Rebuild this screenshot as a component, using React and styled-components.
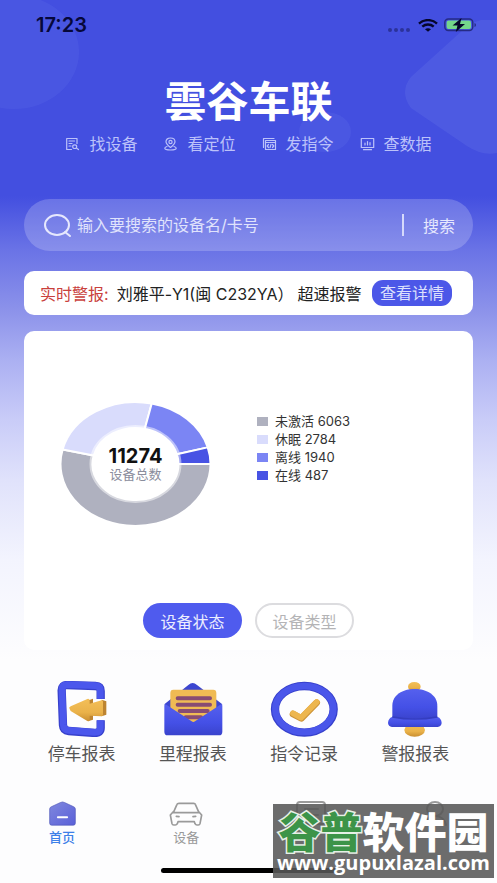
import React, { useState } from 'react';
import styled, { createGlobalStyle, css } from 'styled-components';

const GlobalStyle = createGlobalStyle`
  * {
    box-sizing: border-box;
  }

  body {
    margin: 0;
    background: #fdfdfe;
    font-family: Inter, 'Noto Sans CJK SC', sans-serif;
  }

  button,
  input {
    font: inherit;
    border: 0;
    padding: 0;
    background: none;
  }

  ul {
    list-style: none;
    margin: 0;
    padding: 0;
  }
`;

const Page = styled.div`
  position: relative;
  display: flex;
  flex-direction: column;
  min-height: 100vh;
  background: linear-gradient(
    #434fe0 0,
    #434fe0 196px,
    #6a73e6 250px,
    #8c92ea 310px,
    #abb0f2 360px,
    #c9ccf8 420px,
    #e0e2fb 480px,
    #f3f4fe 560px,
    #fdfdfe 660px
  );
  overflow: hidden;
`;

const Backdrop = styled.svg`
  position: absolute;
  top: 0;
  ${(p) => (p.$side === 'left' ? 'left: 0;' : 'right: 0;')}
`;

const StatusBar = styled.div`
  position: relative;
  display: flex;
  justify-content: space-between;
  align-items: center;
  height: 50px;
  padding: 0 20px 0 36px;
  color: #06083a;
  font-size: 20px;
  font-weight: 600;
`;

const StatusIcons = styled.div`
  display: flex;
  align-items: center;
  gap: 6px;
`;

const Hero = styled.header`
  position: relative;
  display: flex;
  flex-direction: column;
  align-items: center;
  gap: 4px;
  padding-top: 26px;
`;

const Brand = styled.h1`
  margin: 0;
  color: #fff;
  font-size: 42px;
  line-height: 52px;
  font-weight: 700;
`;

const Features = styled.ul`
  display: flex;
  gap: 26px;
`;

const Feature = styled.li`
  display: flex;
  align-items: center;
  gap: 9px;
  color: #bcc2fa;
  font-size: 16px;
  line-height: 24px;
`;

const Content = styled.main`
  position: relative;
  display: flex;
  flex-direction: column;
  padding: 43px 24px 0;
`;

const SearchBar = styled.form`
  display: flex;
  align-items: center;
  height: 52px;
  padding: 0 18px 0 20px;
  border-radius: 26px;
  background: rgba(255, 255, 255, 0.2);
  color: #e6e8fd;
  font-size: 16px;
`;

const SearchInput = styled.input`
  flex: 1;
  min-width: 0;
  margin-left: 6px;
  color: #fff;
  outline: none;

  &::placeholder {
    color: #e0e3fc;
    opacity: 1;
  }
`;

const SearchButton = styled.button`
  display: flex;
  align-items: center;
  gap: 19px;
  color: #e6e8fd;
  cursor: pointer;

  &::before {
    content: '';
    width: 2px;
    height: 22px;
    background: #d5d9fb;
  }
`;

const AlertBar = styled.section`
  display: flex;
  align-items: center;
  gap: 8px;
  height: 44px;
  margin-top: 20px;
  padding: 0 21px 0 16px;
  border-radius: 10px;
  background: #fff;
  color: #222;
  font-size: 16px;
  white-space: nowrap;
`;

const AlertLabel = styled.span`
  color: #c9403c;
`;

const AlertText = styled.span`
  display: flex;
  gap: 4px;
`;

const DetailButton = styled.button`
  width: 80px;
  height: 26px;
  margin-left: auto;
  border-radius: 11px;
  background: #4c57e8;
  color: #dde0fd;
  line-height: 26px;
  cursor: pointer;
`;

const Card = styled.section`
  display: flex;
  flex-direction: column;
  margin-top: 16px;
  padding: 71px 36px 12px;
  border-radius: 10px;
  background: #fff;
`;

const ChartRow = styled.div`
  display: flex;
  align-items: flex-start;
  gap: 46px;
`;

const Donut = styled.div`
  display: grid;
  place-items: center;

  > * {
    grid-area: 1 / 1;
  }
`;

const Total = styled.div`
  display: flex;
  flex-direction: column;
  align-items: center;
  color: #8a8d9c;
  font-size: 13px;
  line-height: 16px;

  strong {
    color: #111;
    font-size: 20px;
    line-height: 20px;
    font-weight: 700;
  }
`;

const Legend = styled.ul`
  padding-top: 10px;
  color: #333;
  font-size: 13px;
  line-height: 18px;
`;

const LegendItem = styled.li`
  display: flex;
  align-items: center;
  gap: 7px;

  &::before {
    content: '';
    width: 11px;
    height: 9px;
    background: ${(p) => p.$color};
  }
`;

const Switcher = styled.div`
  display: flex;
  justify-content: center;
  gap: 13px;
  margin-top: 77px;
`;

const Pill = styled.button`
  width: 99px;
  height: 35px;
  border-radius: 18px;
  font-size: 16px;
  cursor: pointer;
  ${(p) =>
    p.$active
      ? css`
          background: #4f5bee;
          color: #eceefe;
        `
      : css`
          border: 2px solid #dcdcdf;
          color: #b4b4b6;
        `}
`;

const Shortcuts = styled.nav`
  display: grid;
  grid-template-columns: repeat(4, 1fr);
  margin: 31px 2px 0;
`;

const Shortcut = styled.a`
  display: flex;
  flex-direction: column;
  align-items: center;
  gap: 4px;
  color: #555;
  font-size: 17px;
  line-height: 26px;
  text-decoration: none;
`;

const TabBar = styled.nav`
  display: grid;
  grid-template-columns: repeat(4, 1fr);
  margin-top: 34px;
`;

const Tab = styled.a`
  display: flex;
  flex-direction: column;
  align-items: center;
  gap: 2px;
  color: ${(p) => (p.$active ? '#3d80e8' : '#999')};
  font-size: 13px;
  line-height: 18px;
  font-weight: ${(p) => (p.$active ? 500 : 400)};
  text-decoration: none;
`;

const HomeIndicator = styled.div`
  width: 176px;
  height: 5px;
  margin: 22px auto 10px;
  border-radius: 3px;
  background: #000;
`;

const Watermark = styled.div`
  position: absolute;
  right: 3px;
  bottom: 5px;
  width: 221px;
  height: 74px;
  padding-top: 3px;
  background: rgba(88, 88, 88, 0.88);
  color: #fff;
  text-align: center;
  white-space: nowrap;
`;

const WatermarkName = styled.div`
  font: 900 42px/46px 'Noto Sans CJK SC', sans-serif;

  span {
    color: #3c9448;
    -webkit-text-stroke: 3px #e6f0e6;
    paint-order: stroke fill;
  }
`;

const WatermarkUrl = styled.div`
  font: 700 20px/20px 'Open Sans', sans-serif;
`;

const stats = [
  { name: '未激活', value: 6063, color: '#afb1bf' },
  { name: '休眠', value: 2784, color: '#d9dcfc' },
  { name: '离线', value: 1940, color: '#7b85f4' },
  { name: '在线', value: 487, color: '#4853e4' },
];

const total = stats.reduce((sum, s) => sum + s.value, 0);

const point = (angle, rx, ry) => `${75 + rx * Math.cos(angle)} ${62 + ry * Math.sin(angle)}`;

const DonutChart = () => {
  let start = 0;
  return (
    <svg width="151" height="124" viewBox="0 0 150 124" aria-hidden="true">
      {stats.map((s) => {
        const end = start + (s.value / total) * Math.PI * 2;
        const large = end - start > Math.PI ? 1 : 0;
        const d = `M${point(start, 75, 62)} A75 62 0 ${large} 1 ${point(end, 75, 62)} L${point(end, 43, 36)} A43 36 0 ${large} 0 ${point(start, 43, 36)}Z`;
        start = end;
        return <path key={s.name} d={d} fill={s.color} stroke="#fff" strokeWidth="2" />;
      })}
      <ellipse cx="75" cy="62" rx="44" ry="37" fill="none" stroke="#fff" strokeOpacity=".5" strokeWidth="4" />
    </svg>
  );
};

const LineIcon = ({ children }) => (
  <svg width="15" height="14" viewBox="0 0 14 14" fill="none" stroke="currentColor" strokeWidth="1.2" strokeLinecap="round" strokeLinejoin="round" aria-hidden="true">
    {children}
  </svg>
);

const features = [
  {
    label: '找设备',
    icon: <path d="M6 12.5H1.2V1.5h10.3v5M3.5 4h5.5M3.5 6.5h3M3.5 9h2M11.2 9.7a2 1.8 0 1 1-4 0 2 1.8 0 0 1 4 0M10.8 11l2.2 1.6" />,
  },
  {
    label: '看定位',
    icon: (
      <>
        <path d="M7 10.5C3.8 8 2.5 6.5 2.5 4.8 2.5 2.5 4.5 1 7 1s4.5 1.5 4.5 3.8C11.5 6.5 10.2 8 7 10.5z" />
        <circle cx="7" cy="5" r="1.6" />
        <path d="M3.5 9.5C2 10 1.3 10.7 1.3 11.3c0 1 2.5 1.7 5.7 1.7s5.7-.7 5.7-1.7c0-.6-.7-1.3-2.2-1.8" />
      </>
    ),
  },
  {
    label: '发指令',
    icon: (
      <>
        <path d="M1 10.5V1.5h10.5" />
        <path d="M3 3.5h10v9H3zM3 5.5h10M6 7.5 4.7 9 6 10.5M10 7.5 11.3 9 10 10.5M8.5 7.3l-1 3.4" />
      </>
    ),
  },
  {
    label: '查数据',
    icon: <path d="M.8 1.5h12.4v9H.8zM3 12.7h8M4.5 6v2M7 4.5V8M9.5 5.5V8" />,
  },
];

const WifiIcon = () => (
  <svg width="20" height="13" viewBox="0 0 20 13" fill="none" stroke="#05062a" strokeWidth="2.4" aria-hidden="true">
    <path d="M1 4.7C6-.1 14-.1 19 4.7M4.3 7.7c3.3-2.9 8.1-2.9 11.4 0" />
    <path d="M7 10.3c1.7-1.5 4.3-1.5 6 0l-3 2.4z" fill="#05062a" stroke="none" />
  </svg>
);

const BatteryIcon = () => (
  <svg width="33" height="14" viewBox="0 0 33 14" aria-hidden="true">
    <rect x=".8" y="1" width="28" height="11.5" rx="3.5" fill="none" stroke="#252b84" strokeWidth="1.4" />
    <rect x="2.6" y="2.6" width="24.4" height="8.3" rx="2" fill="#74d68b" />
    <path d="M30.5 5v4c2-.8 2-3.2 0-4z" fill="#252b84" />
    <path d="M17.5 0 8.5 7.5h5L11.8 14 21 6h-5z" fill="#05062a" />
  </svg>
);

const HiddenSvg = styled.svg`
  position: absolute;
`;

const Gradients = () => (
  <HiddenSvg width="0" height="0" aria-hidden="true">
    <defs>
      <linearGradient id="blue" x1="0" y1="0" x2="0" y2="1">
        <stop offset="0" stopColor="#5560ee" />
        <stop offset=".6" stopColor="#4450e6" />
        <stop offset="1" stopColor="#3a43cc" />
      </linearGradient>
      <linearGradient id="gold" x1="0" y1="0" x2="0" y2="1">
        <stop offset="0" stopColor="#f3bf58" />
        <stop offset=".6" stopColor="#eab24a" />
        <stop offset="1" stopColor="#ca8f32" />
      </linearGradient>
      <linearGradient id="home" x1="0" y1="0" x2="1" y2="1">
        <stop offset="0" stopColor="#8088de" />
        <stop offset="1" stopColor="#5a60d8" />
      </linearGradient>
    </defs>
  </HiddenSvg>
);

const ParkingIcon = () => (
  <svg width="51" height="56" viewBox="80 34 153 168" aria-hidden="true">
    <path d="M214 88V64q0-14-16-15l-84-3q-17 0-17 16l4 105q1 16 17 17l78 6q18 0 18-15v-23" fill="none" stroke="#3740cc" strokeWidth="25" />
    <path d="M213 87V62q0-13-15-14l-84-3q-16 0-16 15l4 106q1 15 16 16l78 6q17 0 17-14v-22" fill="none" stroke="#4b57ec" strokeWidth="20" />
    <path d="M178 92l13-5v63l-13 4zM217 90l14 5v40l-14 5z" fill="#bd8430" />
    <path d="M121 118q-4-4 3-8l50-22q7-2 7 6v8l36-10q4 0 4 4v40q0 4-5 4l-35-2v13q0 6-7 3l-50-30z" fill="url(#gold)" />
  </svg>
);

const MileageIcon = () => (
  <svg width="60" height="56" viewBox="398 34 180 168" aria-hidden="true">
    <path d="M402 104l72-58q13-12 26 0l76 58-87 70z" fill="#3c46d0" />
    <path d="M420 70q0-10 9-10h120q9 0 9 10v95H420z" fill="#f0bb54" />
    <path d="M442 86h97M442 105h97M448 124h84M466 143h46" stroke="#884c73" strokeWidth="12" strokeLinecap="round" />
    <path d="M402 108q0-6 6-3l76 50q5 4 10 0l76-50q6-3 6 3v78q0 11-10 11H412q-10 0-10-11z" fill="url(#blue)" />
  </svg>
);

const CommandIcon = () => (
  <svg width="68" height="56" viewBox="58 34 204 168" aria-hidden="true">
    <ellipse cx="161" cy="119" rx="88" ry="70" fill="none" stroke="#3740cc" strokeWidth="25" />
    <ellipse cx="161" cy="118" rx="87" ry="69" fill="none" stroke="#4a56ea" strokeWidth="20" />
    <path d="M127 133l25 13 46-47" fill="none" stroke="#cc9338" strokeWidth="20" strokeLinecap="round" strokeLinejoin="round" />
    <path d="M127 131l24 13 47-47" fill="none" stroke="#edb64e" strokeWidth="17" strokeLinecap="round" strokeLinejoin="round" />
  </svg>
);

const BellIcon = () => (
  <svg width="56" height="56" viewBox="412 34 168 168" aria-hidden="true">
    <ellipse cx="494" cy="51" rx="19" ry="14" fill="url(#gold)" />
    <ellipse cx="495" cy="181" rx="31" ry="20" fill="url(#gold)" />
    <path d="M428 150V108c0-32 31-50 67-50s68 18 68 50v42z" fill="url(#blue)" />
    <path d="M427 142q68 12 137 0 11 4 12 18-1 10-12 12H427q-11-2-12-12 1-14 12-18z" fill="url(#blue)" />
    <path d="M428 142q67 13 135 0" fill="none" stroke="#343dc0" strokeWidth="4" />
  </svg>
);

const shortcuts = [
  { label: '停车报表', icon: <ParkingIcon /> },
  { label: '里程报表', icon: <MileageIcon /> },
  { label: '指令记录', icon: <CommandIcon /> },
  { label: '警报报表', icon: <BellIcon /> },
];

const tabs = [
  {
    id: 'home',
    label: '首页',
    icon: (
      <svg width="27" height="25" viewBox="147 61 82 75" aria-hidden="true">
        <path d="M149 85q0-5 5-7l28-13q6-3 12 0l28 13q5 2 5 7v43q0 6-6 6h-66q-6 0-6-6z" fill="url(#home)" stroke="#5057b8" strokeWidth="2" />
        <path d="M174 110h28" stroke="#fff" strokeWidth="6" strokeLinecap="round" />
      </svg>
    ),
  },
  {
    id: 'devices',
    label: '设备',
    icon: (
      <svg width="34" height="25" viewBox="510 61 102 75" fill="none" stroke="#9a9a9a" strokeWidth="5" strokeLinejoin="round" strokeLinecap="round" aria-hidden="true">
        <path d="M523 96l11-25q1-3 6-3h44q4 0 5 3l11 25M523 96h77M522 94l-8 9 5 26q1 4 5 4h5q4 0 6-4l2-6h49l2 6q2 4 6 4h4q4 0 5-4l5-26-8-9M532 107l8 1M582 108l8-1" />
      </svg>
    ),
  },
  {
    id: 'list',
    icon: (
      <svg width="32" height="25" viewBox="0 0 32 25" fill="none" stroke="#9a9a9a" strokeWidth="2" strokeLinecap="round" aria-hidden="true">
        <path d="M2 20V4q0-3 3-3h22q3 0 3 3v16q0 3-3 3H5q-3 0-3-3M10 8h13M10 14h13" />
      </svg>
    ),
  },
  {
    id: 'profile',
    icon: (
      <svg width="32" height="25" viewBox="0 0 32 25" fill="none" stroke="#9a9a9a" strokeWidth="2" strokeLinecap="round" aria-hidden="true">
        <ellipse cx="16" cy="8" rx="8" ry="7" />
        <path d="M5 24c1-5 5-9 11-9s10 4 11 9" />
      </svg>
    ),
  },
];

const App = () => {
  const [view, setView] = useState('设备状态');

  return (
    <Page>
      <GlobalStyle />
      <Gradients />
      <Backdrop $side="left" width="80" height="112" aria-hidden="true">
        <ellipse cx="14" cy="52" rx="65" ry="57" fill="#6c7bf0" fillOpacity=".18" />
      </Backdrop>
      <Backdrop $side="right" width="210" height="160" aria-hidden="true">
        <path d="M210 20 194 20Q185 22 176 30L124 77Q112 92 124 108L180 146Q195 156 210 153z" fill="#8090f0" fillOpacity=".18" />
        <ellipse cx="38" cy="132" rx="26" ry="20" fill="#7080f0" fillOpacity=".18" />
      </Backdrop>

      <StatusBar>
        <time>17:23</time>
        <StatusIcons>
          <svg width="24" height="13" fill="#2b329a" aria-hidden="true">
            <circle cx="2" cy="11" r="2" />
            <circle cx="8" cy="11" r="2" />
            <circle cx="14" cy="11" r="2" />
            <circle cx="20" cy="11" r="2" />
          </svg>
          <WifiIcon />
          <BatteryIcon />
        </StatusIcons>
      </StatusBar>

      <Hero>
        <Brand>雲谷车联</Brand>
        <Features>
          {features.map((f) => (
            <Feature key={f.label}>
              <LineIcon>{f.icon}</LineIcon>
              {f.label}
            </Feature>
          ))}
        </Features>
      </Hero>

      <Content>
        <SearchBar onSubmit={(e) => e.preventDefault()}>
          <svg width="27" height="23" viewBox="0 0 27 23" fill="none" stroke="currentColor" strokeWidth="2" strokeLinecap="round" aria-hidden="true">
            <ellipse cx="13" cy="11" rx="12" ry="10" />
            <path d="M21 18l5 4" />
          </svg>
          <SearchInput type="text" aria-label="搜索设备" placeholder="输入要搜索的设备名/卡号" />
          <SearchButton type="submit">搜索</SearchButton>
        </SearchBar>

        <AlertBar>
          <AlertLabel>实时警报:</AlertLabel>
          <AlertText>
            <span>刘雅平-Y1(闽 C232YA）</span>
            <span>超速报警</span>
          </AlertText>
          <DetailButton type="button">查看详情</DetailButton>
        </AlertBar>

        <Card>
          <ChartRow>
            <Donut>
              <DonutChart />
              <Total>
                <strong>{total}</strong>
                设备总数
              </Total>
            </Donut>
            <Legend>
              {stats.map((s) => (
                <LegendItem key={s.name} $color={s.color}>
                  {s.name} {s.value}
                </LegendItem>
              ))}
            </Legend>
          </ChartRow>
          <Switcher>
            {['设备状态', '设备类型'].map((name) => (
              <Pill key={name} type="button" $active={view === name} onClick={() => setView(name)}>
                {name}
              </Pill>
            ))}
          </Switcher>
        </Card>

        <Shortcuts>
          {shortcuts.map((s) => (
            <Shortcut key={s.label} href="#">
              {s.icon}
              {s.label}
            </Shortcut>
          ))}
        </Shortcuts>
      </Content>

      <TabBar>
        {tabs.map((t) => (
          <Tab key={t.id} href="#" $active={t.id === 'home'} aria-label={t.label || t.id}>
            {t.icon}
            {t.label}
          </Tab>
        ))}
      </TabBar>
      <HomeIndicator />

      <Watermark>
        <WatermarkName>
          <span>谷普</span>软件园
        </WatermarkName>
        <WatermarkUrl>www.gupuxlazal.com</WatermarkUrl>
      </Watermark>
    </Page>
  );
};

export default App;
